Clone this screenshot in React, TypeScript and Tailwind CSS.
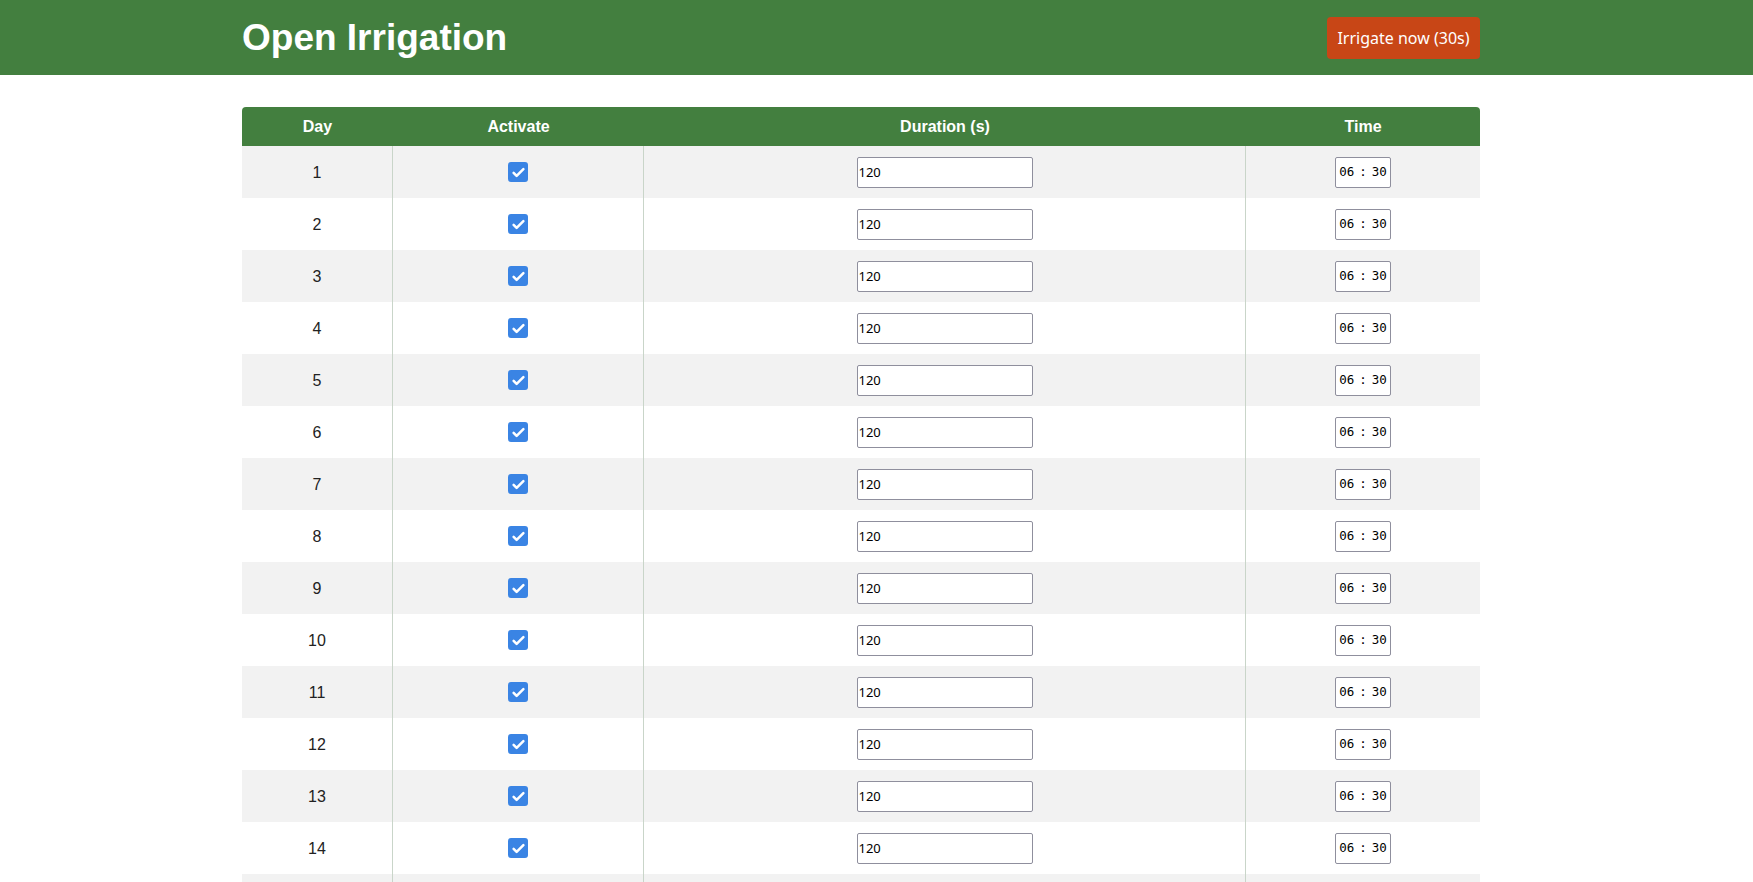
import React from 'react';

const days = Array.from({ length: 15 }, (_, i) => i + 1);

function Check() {
  return (
    <span className="inline-flex items-center justify-center w-5 h-5 rounded-[3px] bg-[#3a84e4]">
      <svg viewBox="0 0 20 20" className="w-[15px] h-[15px]" fill="none">
        <path d="M3.5 10.5l4 4 9-9" stroke="white" strokeWidth="3.4" strokeLinecap="round" strokeLinejoin="round" />
      </svg>
    </span>
  );
}

export default function App() {
  return (
    <div className="h-screen overflow-hidden bg-white font-['Liberation_Sans',Arial,sans-serif] text-[#222]">
      <header className="bg-[#437f3f] h-[75px]">
        <div className="ml-[242px] w-[1238px] h-full flex items-center justify-between">
          <h1 className="text-[37px] font-bold text-white leading-none">Open Irrigation</h1>
          <button className="h-[42px] w-[153px] rounded-[4px] bg-[#c84616] text-white text-[16px] font-['Noto_Sans',sans-serif]">
            Irrigate now (30s)
          </button>
        </div>
      </header>

      <main className="ml-[242px] w-[1238px] mt-[32px]">
        <div className="grid grid-cols-[151px_251px_602px_234px] h-[39px] bg-[#437f3f] rounded-t-[4px] text-white font-bold text-[16px]">
          <div className="flex items-center justify-center">Day</div>
          <div className="flex items-center justify-center">Activate</div>
          <div className="flex items-center justify-center">Duration (s)</div>
          <div className="flex items-center justify-center">Time</div>
        </div>
        {days.map((d) => (
          <div
            key={d}
            className={`grid grid-cols-[151px_251px_602px_234px] h-[52px] text-[16px] ${d % 2 === 1 ? 'bg-[#f2f2f2]' : 'bg-white'}`}
          >
            <div className="flex items-center justify-center pt-[1px] border-r border-[#c9d5c9]">{d}</div>
            <div className="flex items-center justify-center border-r border-[#c9d5c9]">
              <Check />
            </div>
            <div className="flex items-center justify-center border-r border-[#c9d5c9]">
              <div className="w-[176px] h-[31px] bg-white border border-[#8f8f9d] rounded-[2px] flex items-center pl-[1px] pt-[2px] text-[13px] text-black font-['Noto_Sans',sans-serif]">
                120
              </div>
            </div>
            <div className="flex items-center justify-center">
              <div className="w-[56px] h-[31px] bg-white border border-[#8f8f9d] rounded-[2px] flex items-center justify-center gap-[5px] whitespace-nowrap text-[12.5px] text-black font-['DejaVu_Sans_Mono',monospace]">
                <span>06</span>
                <span>:</span>
                <span>30</span>
              </div>
            </div>
          </div>
        ))}
      </main>
    </div>
  );
}
